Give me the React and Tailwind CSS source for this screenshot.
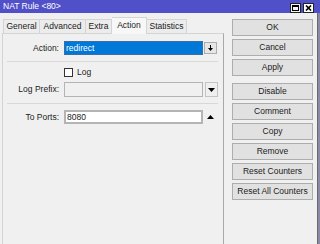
export default function App() {
  const Btn = ({ children, className = "" }) => (
    <div className={"w-[81px] h-[17px] bg-[#e1e1e1] border border-[#adadad] flex items-center justify-center leading-none " + className}>
      {children}
    </div>
  );
  return (
    <div className="w-[320px] h-[244px] overflow-hidden bg-[#f0f0f0] flex flex-col text-[8.5px] text-[#1b1b1b] font-['Liberation_Sans',Arial,sans-serif]">
      {/* Title bar */}
      <div className="h-[13px] shrink-0 bg-[#5050c8] flex items-start">
        <span className="text-white ml-[3px] mt-[2px] leading-[9px]">NAT Rule &lt;80&gt;</span>
        <div className="ml-auto mr-[6px] mt-[3px] flex gap-[2px]">
          <div className="w-[11px] h-[10px] bg-[#f2f2f2] border border-[#222] flex items-center justify-center">
            <div className="w-[7px] h-[6px] border border-black border-t-2" />
          </div>
          <div className="w-[11px] h-[10px] bg-white border border-[#222] flex items-center justify-center">
            <svg width="7" height="6" viewBox="0 0 7 6">
              <path d="M1 0.5 L6 5.5 M6 0.5 L1 5.5" stroke="#000" strokeWidth="1.6" />
            </svg>
          </div>
        </div>
      </div>
      {/* Body */}
      <div className="flex-1 flex">
        {/* Left: tabs + panel */}
        <div className="w-[226px] flex flex-col pl-[2px] pr-[2px]">
          <div className="h-[16px] mt-[4px] flex items-end pl-[1px] relative z-10">
            <div className="w-[37px] h-[14px] border border-b-0 border-[#d4d4d4] bg-[#ececec] flex items-center justify-center">General</div>
            <div className="w-[46px] h-[14px] border border-l-0 border-b-0 border-[#d4d4d4] bg-[#ececec] flex items-center justify-center">Advanced</div>
            <div className="w-[26px] h-[14px] border border-l-0 border-b-0 border-[#d4d4d4] bg-[#ececec] flex items-center justify-center">Extra</div>
            <div className="w-[35px] h-[17px] mb-[-1px] border border-l-0 border-b-0 border-[#d4d4d4] bg-[#f7f7f7] flex items-center justify-center pb-[1px]">Action</div>
            <div className="w-[40px] h-[14px] border border-l-0 border-b-0 border-[#d4d4d4] bg-[#ececec] flex items-center justify-center">Statistics</div>
          </div>
          <div className="flex-1 border border-b-0 border-[#d4d4d4] border-r-[#a8a8a8] bg-[#f0f0f0] pt-[7px]">
            {/* Action row */}
            <div className="flex items-center h-[14px]">
              <div className="w-[56px] text-right">Action:</div>
              <div className="ml-[5px] w-[139px] h-[14px] bg-[#0078d7] border border-[#3a6ea5] text-white flex items-center pl-[1px]">redirect</div>
              <div className="ml-[1px] w-[13px] h-[12px] border border-[#adadad] bg-[#e6e6e6] flex items-center justify-center">
                <svg width="5" height="6" viewBox="0 0 5 6">
                  <rect x="2" y="0" width="1" height="3" fill="#000" />
                  <path d="M0 3 L5 3 L2.5 6 Z" fill="#000" />
                </svg>
              </div>
            </div>
            <div className="ml-[4px] w-[211px] h-px bg-[#d8d8d8] mt-[6px]" />
            {/* Log checkbox */}
            <div className="flex items-center h-[10px] mt-[5px]">
              <div className="ml-[61px] w-[9px] h-[9px] border border-[#333] bg-white" />
              <span className="ml-[4px]">Log</span>
            </div>
            {/* Log Prefix */}
            <div className="flex items-center h-[15px] mt-[5px]">
              <div className="w-[56px] text-right">Log Prefix:</div>
              <div className="ml-[5px] w-[139px] h-[15px] bg-[#f0f0f0] border border-[#b4b4b4]" />
              <div className="ml-[2px] w-[13px] h-[15px] border border-[#c4c4c4] bg-[#efefef] flex items-center justify-center">
                <svg width="7" height="4" viewBox="0 0 7 4">
                  <path d="M0 0 L7 0 L3.5 4 Z" fill="#000" />
                </svg>
              </div>
            </div>
            <div className="ml-[4px] w-[211px] h-px bg-[#d8d8d8] mt-[6px]" />
            {/* To Ports */}
            <div className="flex items-center h-[14px] mt-[6px]">
              <div className="w-[56px] text-right">To Ports:</div>
              <div className="ml-[5px] w-[139px] h-[14px] bg-white border-2 border-[#b4b4b4] flex items-center pl-[1px]">8080</div>
              <div className="ml-[4px] w-[7px] flex items-center justify-center">
                <svg width="7" height="4" viewBox="0 0 7 4">
                  <path d="M0 4 L7 4 L3.5 0 Z" fill="#000" />
                </svg>
              </div>
            </div>
          </div>
        </div>
        {/* Right buttons */}
        <div className="w-[91px] flex flex-col pt-[6px] pl-[6px] gap-[3px]">
          <Btn>OK</Btn>
          <Btn>Cancel</Btn>
          <Btn>Apply</Btn>
          <Btn className="mt-[4px]">Disable</Btn>
          <Btn>Comment</Btn>
          <Btn>Copy</Btn>
          <Btn>Remove</Btn>
          <Btn>Reset Counters</Btn>
          <Btn>Reset All Counters</Btn>
        </div>
        <div className="w-[3px] border-l border-[#6a6a6a] bg-[#8a8aa8]" />
      </div>
    </div>
  );
}
